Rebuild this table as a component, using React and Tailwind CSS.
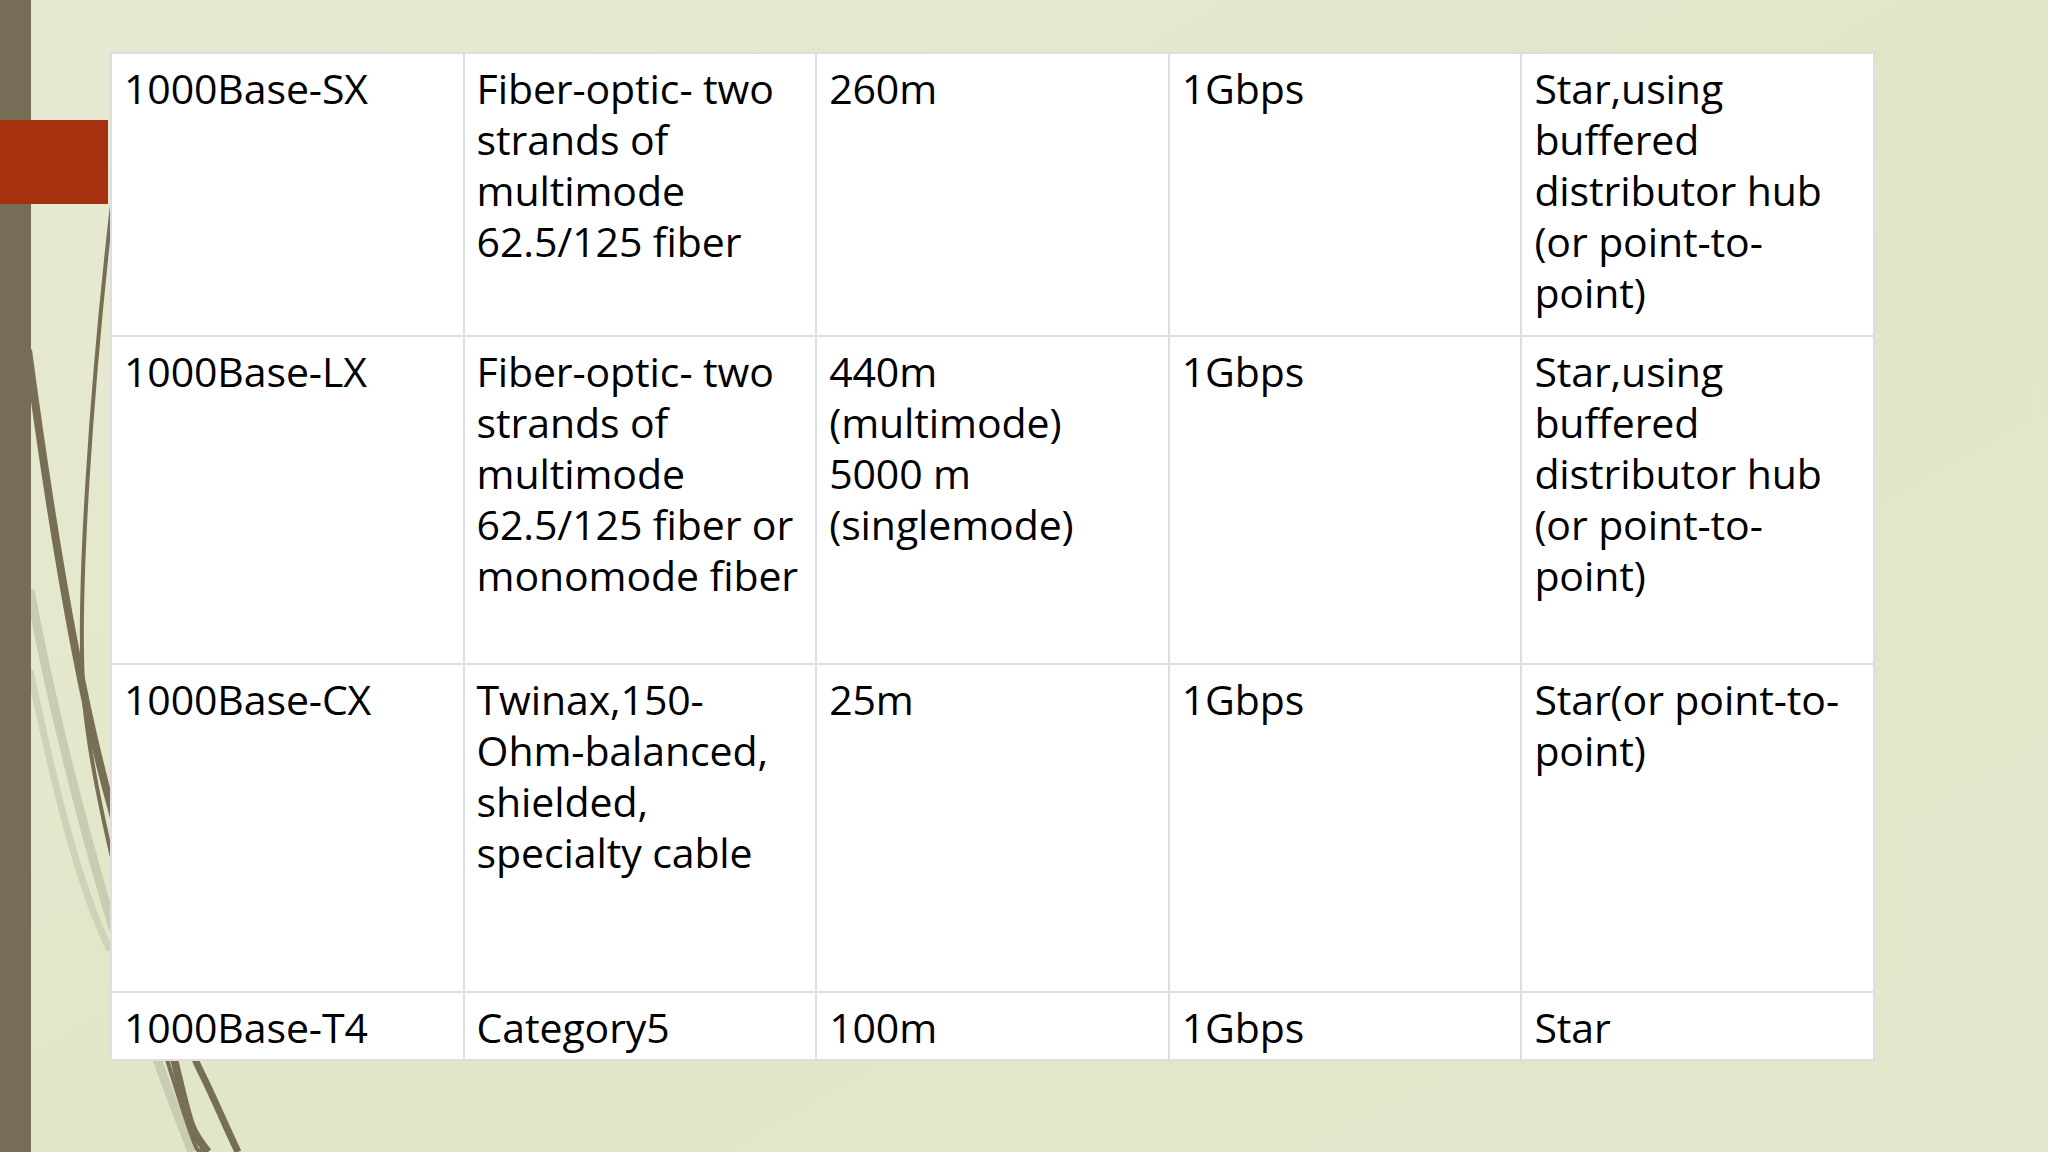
import React from "react";

const rows = [
  [
    ["1000Base-SX"],
    ["Fiber-optic- two", "strands of", "multimode", "62.5/125 fiber"],
    ["260m"],
    ["1Gbps"],
    ["Star,using", "buffered", "distributor hub", "(or point-to-", "point)"],
  ],
  [
    ["1000Base-LX"],
    ["Fiber-optic- two", "strands of", "multimode", "62.5/125 fiber or", "monomode fiber"],
    ["440m", "(multimode)", "5000 m", "(singlemode)"],
    ["1Gbps"],
    ["Star,using", "buffered", "distributor hub", "(or point-to-", "point)"],
  ],
  [
    ["1000Base-CX"],
    ["Twinax,150-", "Ohm-balanced,", "shielded,", "specialty cable"],
    ["25m"],
    ["1Gbps"],
    ["Star(or point-to-", "point)"],
  ],
  [["1000Base-T4"], ["Category5"], ["100m"], ["1Gbps"], ["Star"]],
];

function Decor() {
  return (
    <svg
      className="absolute left-0 top-0"
      width="2048"
      height="1152"
      viewBox="0 0 2048 1152"
      fill="none"
    >
      <path d="M30 590 C 60 750, 110 930, 150 1040 S 180 1120, 192 1152" stroke="#c9ccb2" strokeWidth="9" />
      <path d="M30 670 C 55 790, 80 890, 110 950" stroke="#cfd2b8" strokeWidth="7" />
      <path d="M112 205 C 92 380, 76 600, 84 700 C 92 790, 130 940, 168 1063 S 196 1140, 204 1152" stroke="#776f55" strokeWidth="4" />
      <path d="M28 350 C 48 500, 78 690, 112 810 C 140 920, 160 1000, 175 1063 S 190 1130, 208 1152" stroke="#776f55" strokeWidth="8" />
      <path d="M150 900 C 170 980, 185 1040, 200 1070 S 225 1125, 238 1152" stroke="#776f55" strokeWidth="7" />
    </svg>
  );
}

export default function App() {
  return (
    <div
      className="relative w-[2048px] h-[1152px] overflow-hidden bg-gradient-to-br from-[#e7ead3] via-[#e2e6c8] to-[#e3e7cb] flex"
      style={{ fontFamily: '"Open Sans", "Noto Sans", sans-serif' }}
    >
      <Decor />
      <div className="relative w-[31px] h-full bg-[#776c55] shrink-0" />
      <div className="absolute left-0 top-[120px] w-[108px] h-[84px] bg-[#a6310f]" />
      <div className="relative pl-[79px] pt-[52px]">
        <div className="grid grid-cols-[repeat(5,350.6px)] grid-rows-[281px_326px_326px_66px] gap-[2px] p-[2px] bg-[#dedede]">
          {rows.map((row, ri) =>
            row.map((cell, ci) => (
              <div
                key={ri + "-" + ci}
                className="bg-white pl-[12px] pt-[9px] text-[41px] leading-[51px] text-black tracking-[-0.1px]"
              >
                {cell.map((line, li) => (
                  <div key={li} className="whitespace-nowrap">
                    {line}
                  </div>
                ))}
              </div>
            ))
          )}
        </div>
      </div>
    </div>
  );
}
